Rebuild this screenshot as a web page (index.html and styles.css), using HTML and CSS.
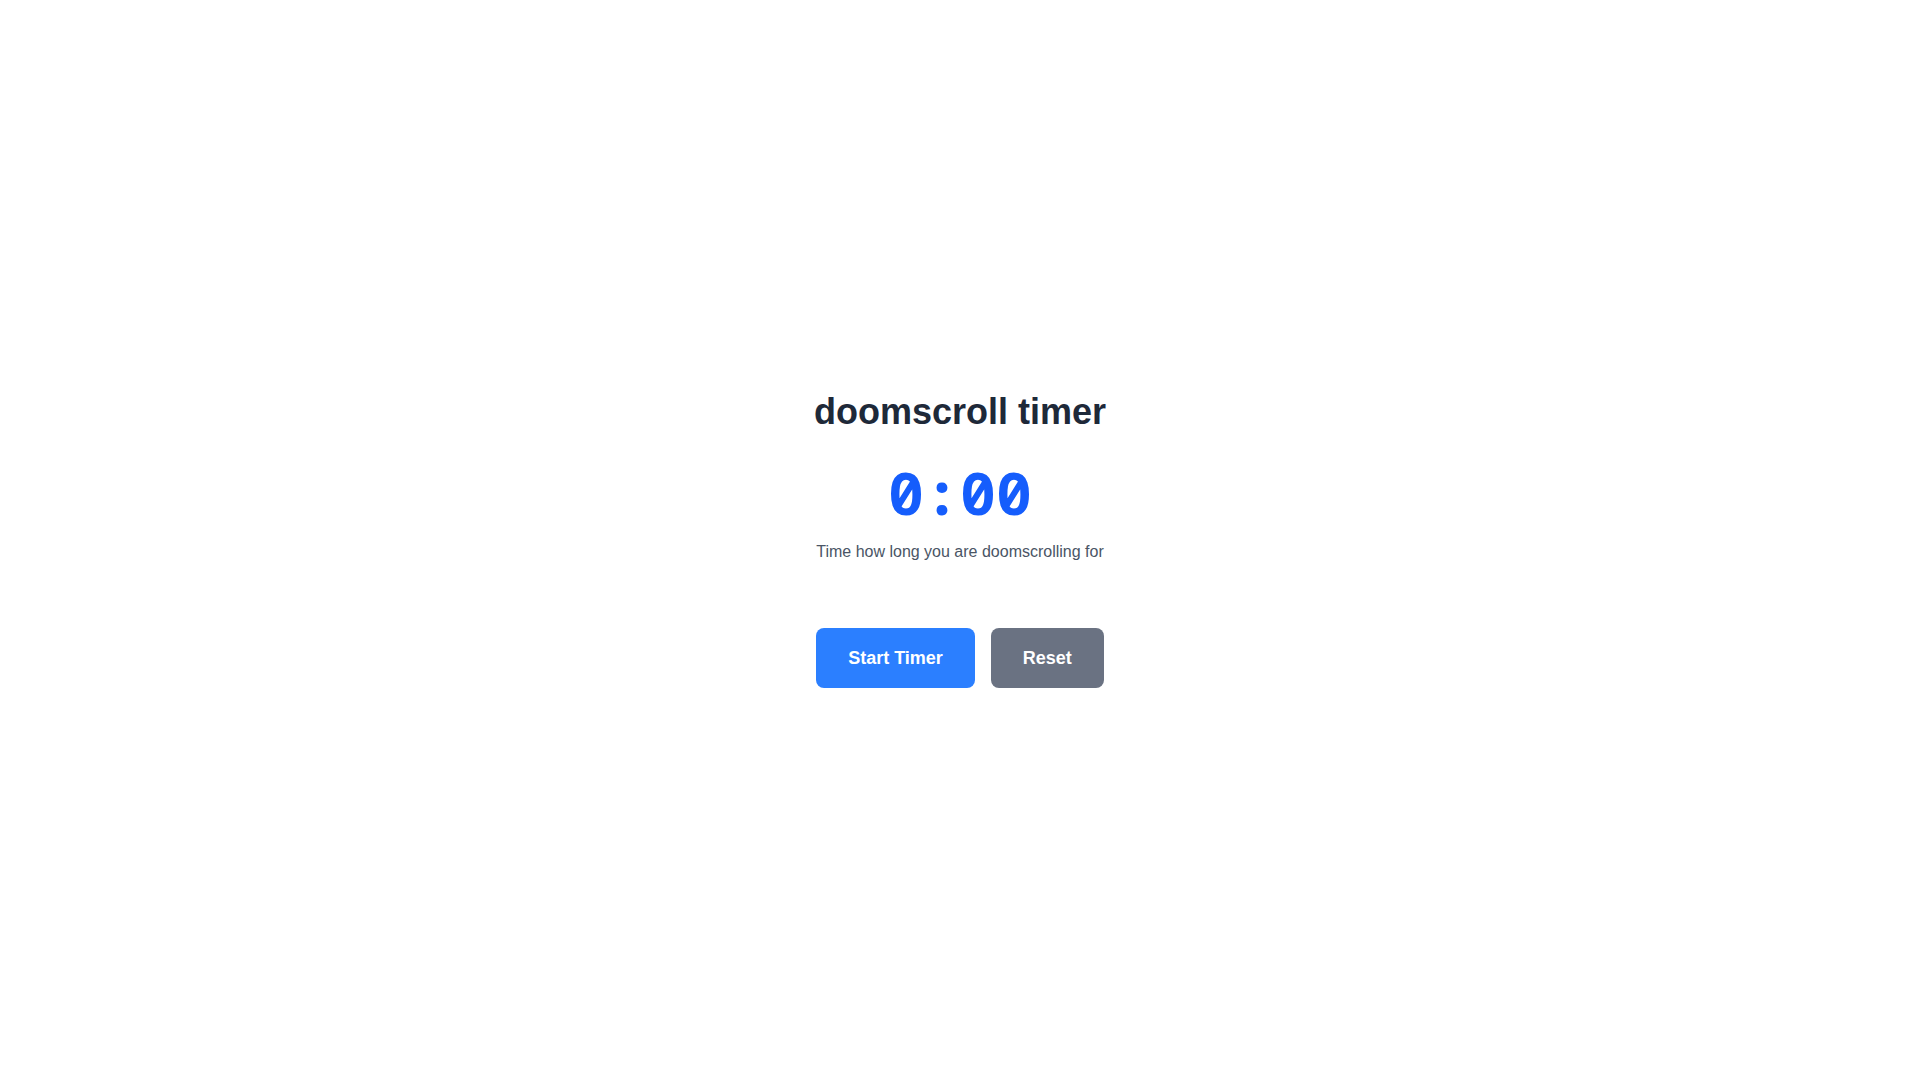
FILE: index.html
```html
<!DOCTYPE html>
<html lang="en">
<head>
    <meta charset="UTF-8">
    <meta name="viewport" content="width=device-width, initial-scale=1.0">
    <title>doomscroll timer</title>
    <link rel="stylesheet" href="styles.css">
</head>
<body>
    <div class="page">
        <div class="container">
            <h1>doomscroll timer</h1>
            <div id="timer" class="timer">0:00</div>
            <p class="subtitle">Time how long you are doomscrolling for</p>
            <div class="button-container">
                <button id="startBtn" class="btn btn-start" onclick="toggleTimer()">Start Timer</button>
                <button class="btn btn-reset" onclick="resetTimer()">Reset</button>
            </div>
        </div>
    </div>

    <script>
        let seconds = 0;
        let interval = null;

        function render() {
            const m = Math.floor(seconds / 60);
            const s = seconds % 60;
            document.getElementById('timer').textContent = m + ':' + String(s).padStart(2, '0');
        }

        function toggleTimer() {
            const btn = document.getElementById('startBtn');
            if (interval) {
                clearInterval(interval);
                interval = null;
                btn.textContent = 'Start Timer';
            } else {
                interval = setInterval(() => { seconds++; render(); }, 1000);
                btn.textContent = 'Stop Timer';
            }
        }

        function resetTimer() {
            clearInterval(interval);
            interval = null;
            seconds = 0;
            document.getElementById('startBtn').textContent = 'Start Timer';
            render();
        }
    </script>
</body>
</html>
```

FILE: styles.css
```css
body {
    font-family: 'Liberation Sans', Arial, sans-serif;
    background-color: #ffffff;
    margin: 0;
}
.page {
    min-height: 100vh;
    display: flex;
    align-items: center;
    justify-content: center;
}
.container {
    text-align: center;
}
h1 {
    font-size: 36px;
    line-height: 40px;
    font-weight: 700;
    color: #1e2939;
    margin: 0 0 30px;
}
.timer {
    font-family: 'Noto Sans Mono', 'DejaVu Sans Mono', monospace;
    font-size: 60px;
    line-height: 1;
    font-weight: 700;
    color: #155dfc;
    margin-bottom: 18px;
}
.subtitle {
    font-size: 16px;
    line-height: 24px;
    color: #4a5565;
    margin: 0 0 64px;
}
.button-container {
    display: flex;
    justify-content: center;
    gap: 16px;
}
.btn {
    font-family: 'Liberation Sans', Arial, sans-serif;
    font-size: 18px;
    line-height: 28px;
    font-weight: 700;
    color: #ffffff;
    border: none;
    border-radius: 8px;
    padding: 16px 32px;
    cursor: pointer;
}
.btn-start {
    background-color: #2b7fff;
}
.btn-start:hover {
    background-color: #155dfc;
}
.btn-reset {
    background-color: #6a7282;
}
.btn-reset:hover {
    background-color: #4a5565;
}
```
